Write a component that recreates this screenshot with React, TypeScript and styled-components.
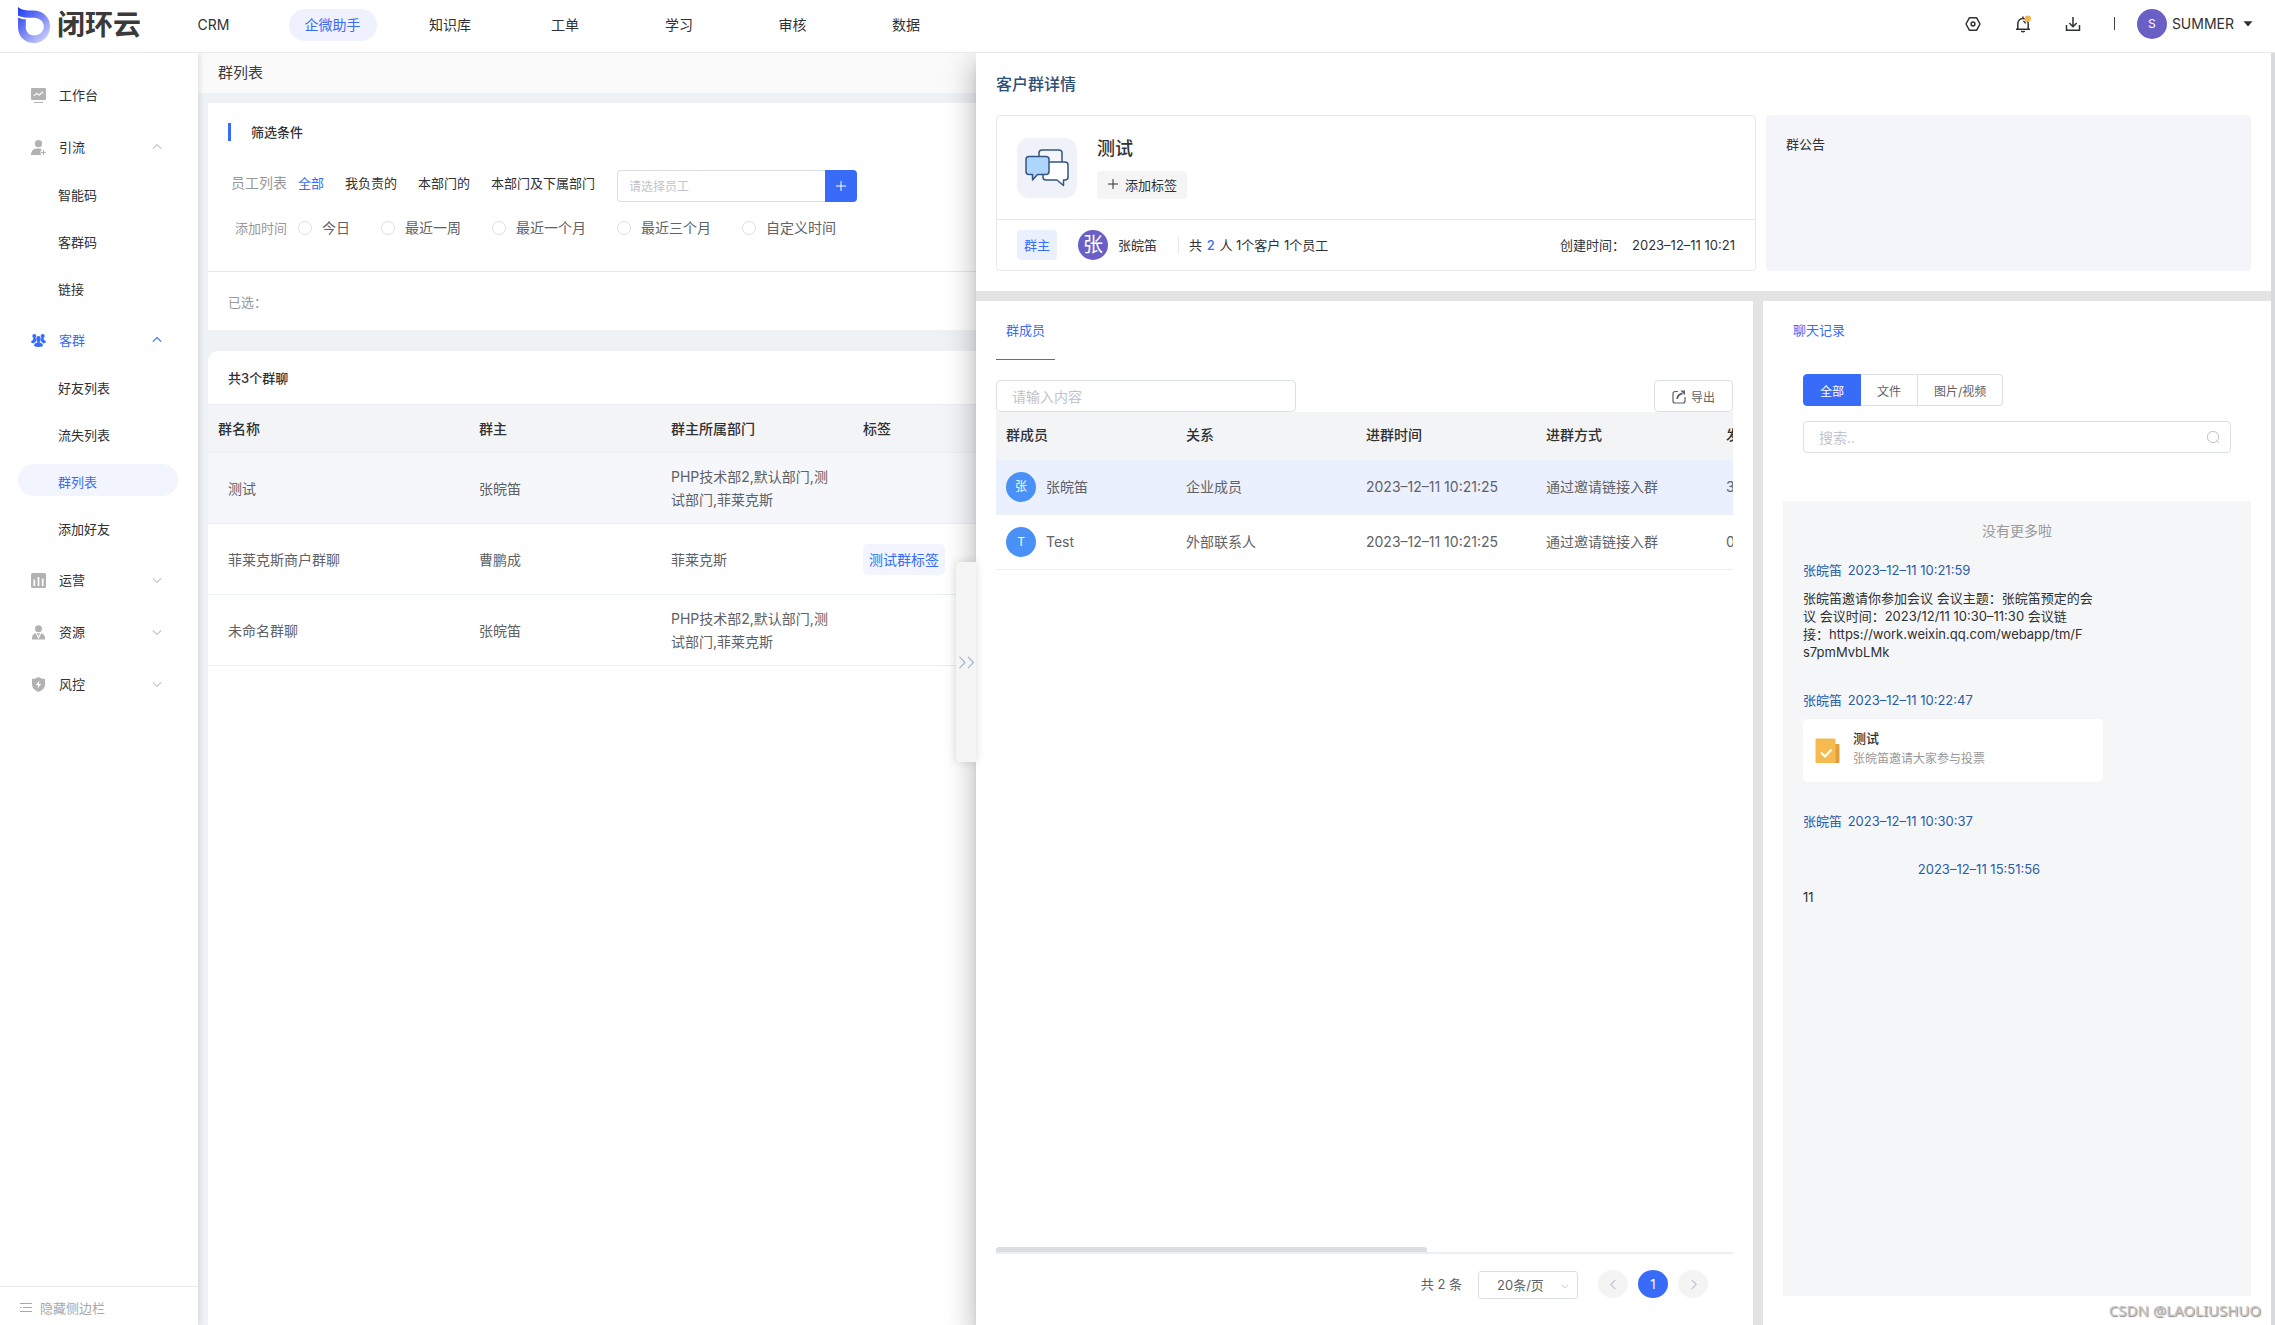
import React from "react";
import styled, { createGlobalStyle, css } from "styled-components";

const BLUE = "#386bf7";
const TEXT = "#303133";
const SUB = "#606266";
const MUTED = "#999999";
const HINT = "#c0c4cc";
const BORDER = "#dcdfe6";
const LINE = "#ebeef5";

const GlobalStyle = createGlobalStyle`
  *, *::before, *::after { box-sizing: border-box; }
  body {
    margin: 0;
    background: #fff;
    color: ${TEXT};
    font-family: Inter, "Noto Sans CJK SC", sans-serif;
    font-size: 13px;
    line-height: 18px;
  }
  button, input, select { font-family: inherit; margin: 0; }
  a { color: inherit; text-decoration: none; }
  h1, h2, p, ul { margin: 0; padding: 0; font-weight: 400; }
  ul { list-style: none; }
`;

/* ---------- shell ---------- */

const Shell = styled.div`
  display: flex;
  flex-direction: column;
  height: 100vh;
  overflow: hidden;
`;

const TopBar = styled.header`
  display: flex;
  align-items: center;
  flex: none;
  height: 53px;
  padding: 0 22px 3px 18px;
  border-bottom: 1px solid #e9e9e9;
`;

const Brand = styled.a`
  display: flex;
  align-items: center;
  gap: 7px;
  width: 136px;
  height: 40px;
  color: #3a3a3a;
  font-size: 28px;
  font-weight: 700;
  line-height: 40px;
  white-space: nowrap;
  svg { flex: none; }
`;

const MainNav = styled.nav`
  display: grid;
  grid-template-columns: 119px 119px 116px 114px 114px 113px 114px;
  justify-items: center;
  font-size: 14px;
`;

const MainNavLink = styled.a<{ $active?: boolean }>`
  height: 32px;
  padding: 0 16px;
  border-radius: 16px;
  line-height: 32px;
  ${(p) => p.$active && css`
    background: #eff2fe;
    color: ${BLUE};
  `}
`;

const TopTools = styled.div`
  display: flex;
  align-items: center;
  margin-left: auto;
  padding-bottom: 2px;
`;

const IconButton = styled.button`
  display: grid;
  place-items: center;
  width: 50px;
  height: 32px;
  padding: 0;
  border: 0;
  background: none;
  color: ${TEXT};
`;

const ToolSeparator = styled.span`
  width: 1px;
  height: 13px;
  margin: 0 22px 0 16px;
  background: #444;
`;

const UserButton = styled.button`
  display: flex;
  align-items: center;
  padding: 0;
  border: 0;
  background: none;
  color: ${TEXT};
  font-size: 14px;
  gap: 5px;
  svg { margin-left: 4px; }
`;

const Avatar = styled.span<{ $color: string; $text: number }>`
  display: inline-grid;
  place-items: center;
  flex: none;
  width: 30px;
  height: 30px;
  border-radius: 50%;
  background: ${(p) => p.$color};
  color: #fff;
  font-size: ${(p) => p.$text}px;
  line-height: 30px;
`;

const Body = styled.div`
  position: relative;
  display: flex;
  flex: 1;
  min-height: 0;
  overflow: hidden;
`;

/* ---------- side bar ---------- */

const SideBar = styled.aside`
  z-index: 1;
  display: flex;
  flex-direction: column;
  flex: none;
  width: 198px;
  background: #fff;
  box-shadow: 1px 0 6px rgba(0, 21, 41, 0.14);
`;

const SideNav = styled.nav`
  flex: 1;
  padding-top: 17px;
`;

const SideParent = styled.a<{ $active?: boolean }>`
  display: flex;
  align-items: center;
  height: 52px;
  padding: 0 36px 2px 31px;
  color: ${(p) => (p.$active ? BLUE : TEXT)};
`;

const SideIcon = styled.span<{ $active?: boolean }>`
  display: flex;
  margin-right: 13px;
  color: ${(p) => (p.$active ? BLUE : "#b2b2b2")};
`;

const SideArrow = styled.span<{ $active?: boolean }>`
  display: flex;
  margin-left: auto;
  color: ${(p) => (p.$active ? BLUE : "#c4c4c4")};
`;

const SideChild = styled.a<{ $active?: boolean }>`
  display: block;
  height: 32px;
  margin: 0 20px 0 18px;
  padding: 4px 0 0 40px;
  border-radius: 16px;
  line-height: 28px;
  color: ${(p) => (p.$active ? BLUE : TEXT)};
  background: ${(p) => (p.$active ? "#f2f5fe" : "none")};
`;

const SideItem = styled.li`
  padding: 3px 0 12px;
`;

const SideFooter = styled.button`
  display: flex;
  align-items: center;
  gap: 8px;
  height: 39px;
  padding: 3px 20px 0;
  border: 0;
  border-top: 1px solid #e9e9e9;
  background: #fff;
  color: #a8a8a8;
  font-size: 13px;
`;

/* ---------- list page ---------- */

const Page = styled.main`
  display: flex;
  flex-direction: column;
  flex: 1;
  min-width: 0;
  background: #eef2f5;
`;

const Crumb = styled.h1`
  height: 40px;
  padding: 0 20px;
  background: #fafafa;
  color: #3d3d3d;
  font-size: 15px;
  line-height: 40px;
`;

const FilterCard = styled.section`
  margin: 10px 10px 21px;
  background: #fff;
`;

const FilterBody = styled.div`
  padding: 20px 20px 27px;
  border-bottom: 1px solid #e9e9e9;
`;

const FilterTitle = styled.h2`
  height: 18px;
  padding-left: 20px;
  border-left: 3px solid ${BLUE};
  font-size: 13px;
  font-weight: 500;
  line-height: 18px;
`;

const FilterRow = styled.div`
  display: flex;
  align-items: center;
  height: 32px;
  margin-top: 10px;
`;

const StaffRow = styled(FilterRow)`
  align-items: flex-start;
  margin-top: 29px;
  line-height: 26px;
`;

const FilterLabel = styled.span<{ $size: number }>`
  width: 59px;
  margin-right: 11px;
  color: ${MUTED};
  font-size: ${(p) => p.$size}px;
  text-align: right;
`;

const ScopeList = styled.div`
  display: flex;
  gap: 21px;
  margin-right: 22px;
`;

const ScopeButton = styled.button<{ $active?: boolean }>`
  padding: 0;
  border: 0;
  background: none;
  color: ${(p) => (p.$active ? BLUE : TEXT)};
  font-size: 13px;
  line-height: 26px;
`;

const StaffPicker = styled.div`
  display: flex;
  width: 240px;
  height: 32px;
`;

const inputBase = css`
  height: 32px;
  border: 1px solid ${BORDER};
  border-radius: 4px;
  background: #fff;
  color: ${SUB};
  outline: none;
  &::placeholder { color: ${HINT}; opacity: 1; }
`;

const StaffInput = styled.input`
  ${inputBase}
  flex: 1;
  min-width: 0;
  padding: 0 11px;
  border-right: 0;
  border-radius: 4px 0 0 4px;
  font-size: 12px;
`;

const StaffAdd = styled.button`
  display: grid;
  place-items: center;
  width: 32px;
  padding: 0;
  border: 0;
  border-radius: 0 4px 4px 0;
  background: ${BLUE};
  color: #fff;
`;

const RadioLabel = styled.label`
  display: flex;
  align-items: center;
  gap: 10px;
  margin-right: 31px;
  color: ${SUB};
  font-size: 14px;
`;

const Radio = styled.input`
  appearance: none;
  width: 14px;
  height: 14px;
  margin: 0;
  border: 1px solid ${BORDER};
  border-radius: 50%;
  background: #fff;
`;

const Picked = styled.p`
  height: 58px;
  padding: 0 20px;
  color: ${MUTED};
  line-height: 60px;
`;

const ListCard = styled.section`
  flex: 1;
  margin: 0 10px;
  border-radius: 10px 10px 0 0;
  background: #fff;
`;

const ListCount = styled.h2`
  height: 53px;
  padding: 0 20px;
  font-size: 13px;
  font-weight: 500;
  line-height: 55px;
`;

const GroupTable = styled.table`
  width: 100%;
  border-collapse: separate;
  border-spacing: 0;
  border-top: 1px solid ${LINE};
  table-layout: fixed;
  color: ${SUB};
  font-size: 14px;
  line-height: 23px;
  th {
    height: 48px;
    padding: 0 10px;
    border-bottom: 1px solid ${LINE};
    background: #f3f4f6;
    color: ${TEXT};
    font-weight: 500;
    text-align: left;
  }
  td {
    height: 71px;
    padding: 0 20px 0 10px;
    border-bottom: 1px solid ${LINE};
  }
  td:first-child { padding-left: 20px; }
`;

const GroupRow = styled.tr<{ $active?: boolean }>`
  background: ${(p) => (p.$active ? "#f5f7fb" : "#fff")};
`;

const TagChip = styled.span`
  display: inline-block;
  height: 31px;
  padding: 0 6px;
  border-radius: 5px;
  background: #f2f5fe;
  color: ${BLUE};
  line-height: 31px;
  white-space: nowrap;
`;

/* ---------- drawer ---------- */

const Drawer = styled.section`
  position: absolute;
  z-index: 2;
  top: 0;
  right: 0;
  bottom: 0;
  left: 976px;
  display: flex;
  flex-direction: column;
  border-right: 4px solid #d9dadb;
  background: #fff;
  box-shadow: 0 8px 10px -5px rgba(0, 0, 0, 0.2), 0 16px 24px 2px rgba(0, 0, 0, 0.14),
    0 6px 30px 5px rgba(0, 0, 0, 0.12);
`;

const DrawerHandle = styled.button`
  position: absolute;
  top: 509px;
  left: -20px;
  display: grid;
  place-items: center;
  width: 20px;
  height: 200px;
  padding: 0;
  border: 0;
  border-radius: 4px 0 0 4px;
  background: #f5f5f5;
  box-shadow: 0 0 10px rgba(0, 0, 0, 0.14);
  color: #9fb3d6;
`;

const DrawerHead = styled.div`
  padding: 20px;
`;

const DrawerTitle = styled.h2`
  margin-bottom: 20px;
  color: #2f5078;
  font-size: 16px;
  font-weight: 500;
  line-height: 22px;
`;

const Summary = styled.div`
  display: grid;
  grid-template-columns: 760fr 485fr;
  gap: 10px;
`;

const GroupCard = styled.div`
  height: 156px;
  border: 1px solid #e9e9e9;
  border-radius: 4px;
`;

const GroupTop = styled.div`
  display: flex;
  gap: 20px;
  height: 104px;
  padding: 22px 20px 0;
  border-bottom: 1px solid #e9e9e9;
`;

const GroupPicture = styled.span`
  display: grid;
  place-items: center;
  width: 60px;
  height: 60px;
  border-radius: 12px;
  background: #f0f2f9;
`;

const GroupName = styled.p`
  height: 33px;
  font-size: 18px;
  font-weight: 500;
  line-height: 22px;
`;

const AddTag = styled.button`
  display: flex;
  align-items: center;
  gap: 6px;
  height: 28px;
  padding: 0 10px 2px;
  border: 0;
  border-radius: 4px;
  background: #f5f5f5;
  color: ${TEXT};
  font-size: 13px;
`;

const OwnerRow = styled.div`
  display: flex;
  align-items: center;
  height: 50px;
  padding: 0 20px;
`;

const OwnerTag = styled.span`
  height: 30px;
  margin-right: 21px;
  padding: 0 7px;
  border-radius: 4px;
  background: #ebf0fe;
  color: ${BLUE};
  line-height: 30px;
`;

const OwnerName = styled.span`
  margin-left: 10px;
  padding-right: 21px;
`;

const OwnerStats = styled.span`
  padding-left: 10px;
  border-left: 1px solid #e9e9e9;
  b {
    margin: 0 1px;
    color: ${BLUE};
    font-weight: 500;
  }
`;

const CreatedAt = styled.span`
  margin-left: auto;
  time { margin-left: 7px; }
`;

const Notice = styled.div`
  padding: 20px;
  border-radius: 4px;
  background: #f4f5fa;
`;

const DrawerPanels = styled.div`
  display: grid;
  grid-template-columns: 777fr 508fr;
  gap: 10px;
  flex: 1;
  min-height: 0;
  border-top: 10px solid #e3e3e3;
  background: #e3e3e3;
`;

const Panel = styled.div`
  display: flex;
  flex-direction: column;
  min-width: 0;
  background: #fff;
  padding: 0 20px;
`;

const PanelTab = styled.button`
  align-self: flex-start;
  height: 59px;
  padding: 0 10px 2px;
  border: 0;
  border-bottom: 1px solid ${BLUE};
  background: none;
  color: ${BLUE};
  font-size: 13px;
`;

const MemberTools = styled.div`
  display: flex;
  justify-content: space-between;
  margin-top: 20px;
`;

const MemberSearch = styled.input`
  ${inputBase}
  width: 300px;
  padding: 0 15px;
  font-size: 14px;
`;

const ExportButton = styled.button`
  display: flex;
  align-items: center;
  justify-content: center;
  gap: 5px;
  width: 79px;
  height: 32px;
  padding: 1px 0 0;
  border: 1px solid ${BORDER};
  border-radius: 4px;
  background: #fff;
  color: ${SUB};
  font-size: 12px;
`;

const MemberArea = styled.div`
  display: flex;
  flex-direction: column;
  flex: 1;
  min-height: 0;
  overflow: hidden;
  border-bottom: 2px solid ${LINE};
`;

const MemberTable = styled.table`
  width: 1260px;
  border-collapse: separate;
  border-spacing: 0;
  table-layout: fixed;
  color: ${SUB};
  font-size: 14px;
  th {
    width: 180px;
    height: 48px;
    padding: 0 10px 2px;
    background: #f3f4f6;
    color: ${TEXT};
    font-weight: 500;
    text-align: left;
  }
  td {
    height: 55px;
    padding: 0 10px;
    border-bottom: 1px solid ${LINE};
  }
`;

const MemberRow = styled.tr<{ $active?: boolean }>`
  background: ${(p) => (p.$active ? "#ebf0fe" : "#fff")};
`;

const MemberName = styled.span`
  display: flex;
  align-items: center;
  gap: 10px;
`;

const ScrollThumb = styled.div`
  width: 431px;
  height: 5px;
  margin-top: auto;
  border-radius: 3px 3px 0 0;
  background: #dddee0;
`;

const Pager = styled.nav`
  display: flex;
  align-items: center;
  justify-content: flex-end;
  gap: 10px;
  height: 71px;
  padding: 0 25px 11px 0;
  color: ${SUB};
`;

const PageSize = styled.label`
  position: relative;
  display: block;
  margin: 2px 10px 0 6px;
  color: ${HINT};
  svg {
    position: absolute;
    top: 11px;
    right: 9px;
    pointer-events: none;
  }
`;

const PageSizeSelect = styled.select`
  appearance: none;
  display: block;
  width: 100px;
  height: 28px;
  padding: 0 18px;
  border: 1px solid ${BORDER};
  border-radius: 3px;
  background: #fff;
  color: ${SUB};
  font-size: 13px;
`;

const PageButton = styled.button<{ $active?: boolean }>`
  display: grid;
  place-items: center;
  width: 30px;
  height: 28px;
  padding: 0;
  border: 0;
  border-radius: 50%;
  background: ${(p) => (p.$active ? BLUE : "#f4f4f5")};
  color: ${(p) => (p.$active ? "#fff" : HINT)};
  font-size: 13px;
`;

/* ---------- chat ---------- */

const ChatTitle = styled.h2`
  height: 73px;
  padding: 0 10px;
  color: ${BLUE};
  font-size: 13px;
  line-height: 58px;
`;

const ChatKinds = styled.div`
  display: flex;
  padding: 0 20px;
`;

const ChatKind = styled.button<{ $active?: boolean }>`
  height: 32px;
  padding: 0 16px;
  border: 1px solid ${(p) => (p.$active ? BLUE : BORDER)};
  border-left-width: ${(p) => (p.$active ? 1 : 0)}px;
  background: ${(p) => (p.$active ? BLUE : "#fff")};
  color: ${(p) => (p.$active ? "#fff" : SUB)};
  font-size: 12px;
  &:first-child { border-radius: 4px 0 0 4px; }
  &:last-child { border-radius: 0 4px 4px 0; }
`;

const ChatSearch = styled.label`
  position: relative;
  display: block;
  margin: 15px 20px 48px;
  color: ${HINT};
  svg {
    position: absolute;
    top: 9px;
    right: 11px;
  }
`;

const ChatSearchInput = styled.input`
  ${inputBase}
  display: block;
  width: 100%;
  padding: 0 30px 0 15px;
  font-size: 14px;
`;

const ChatLog = styled.div`
  flex: 1;
  margin-bottom: 29px;
  padding: 20px;
  background: #f5f6f8;
`;

const ChatEnd = styled.p`
  margin-bottom: 20px;
  color: ${MUTED};
  font-size: 14px;
  line-height: 20px;
  text-align: center;
`;

const Message = styled.article`
  width: 300px;
  margin-bottom: 30px;
`;

const MessageHead = styled.p<{ $nameless?: boolean }>`
  margin-bottom: 10px;
  color: #2a5caa;
  ${(p) => p.$nameless && css`
    padding-left: 50px;
    text-align: center;
  `}
  time { margin-left: 2px; }
`;

const MessageText = styled.p`
  white-space: pre-line;
`;

const VoteCard = styled.div`
  display: flex;
  align-items: center;
  gap: 13px;
  height: 63px;
  padding: 0 12px;
  border-radius: 5px;
  background: #fff;
`;

const VoteTitle = styled.p`
  font-weight: 500;
  line-height: 20px;
`;

const VoteNote = styled.p`
  height: 25px;
  color: ${MUTED};
  font-size: 12px;
  line-height: 22px;
`;

const Watermark = styled.span`
  position: absolute;
  z-index: 3;
  right: 14px;
  bottom: 4px;
  color: #c4c4c4;
  font-family: "Noto Sans", sans-serif;
  font-size: 15px;
  line-height: 22px;
  text-shadow: 1px 1px 1px #888;
`;

/* ---------- drawings ---------- */

type ChevronProps = { dir: "up" | "down" | "left" | "right"; size?: number };

const chevrons = {
  up: "M1 8 6 3 11 8",
  down: "M1 4 6 9 11 4",
  left: "M8 1 3 6 8 11",
  right: "M4 1 9 6 4 11",
};

const Chevron = ({ dir, size = 9 }: ChevronProps) => (
  <svg width={size} height={size} viewBox="0 0 12 12" fill="none" stroke="currentColor" strokeWidth="1.3">
    <path d={chevrons[dir]} />
  </svg>
);

const Plus = ({ size }: { size: number }) => (
  <svg width={size} height={size} viewBox="0 0 12 12" stroke="currentColor" strokeWidth="1">
    <path d="M6 1v10M1 6h10" />
  </svg>
);

const LogoMark = () => (
  <svg width="32" height="36" viewBox="0 0 32 36">
    <defs>
      <linearGradient id="logoFill" x1="0" y1="0" x2="0.8" y2="1">
        <stop offset="0" stopColor="#1c3af5" />
        <stop offset="0.45" stopColor="#6a78f2" />
        <stop offset="1" stopColor="#cfd0fb" />
      </linearGradient>
    </defs>
    <path
      fill="url(#logoFill)"
      fillRule="evenodd"
      d="M0 0C4 3.200 8 3.600 15 3.600 25 3.600 32 10 32 19.500S25 36 16.500 36C7 36 0 30 0 20V10.500C2.500 11.800 5 12.300 7.800 12.300V20c0 5 3.500 8.500 8.500 8.500s9.500-3.800 9.500-9-4.300-8.700-10-8.700C9 10.800 4 10.500 0 8.700Z"
    />
  </svg>
);

const SettingIcon = () => (
  <svg width="16" height="16" viewBox="0 0 16 16" fill="none" stroke="currentColor" strokeWidth="1.5" strokeLinejoin="round">
    <path d="M4.500 1.700h7L15 8l-3.500 6.300h-7L1 8Z" />
    <circle cx="8" cy="8" r="1.900" />
  </svg>
);

const BellIcon = () => (
  <svg width="18" height="18" viewBox="0 0 18 18" fill="none" stroke="currentColor" strokeWidth="1.500">
    <path d="M2 14.200h14M3.800 14V8.600a5.200 5.200 0 0 1 10.400 0V14M9 3.400V1.600M7.200 16.200q1.800 1.200 3.600 0M9.300 6.200q2 .3 2.200 2.300" />
    <circle cx="13.800" cy="3.600" r="3.200" fill="#f5b54a" stroke="none" />
  </svg>
);

const DownloadIcon = () => (
  <svg width="16" height="16" viewBox="0 0 16 16" fill="none" stroke="currentColor" strokeWidth="1.500">
    <path d="M1.500 9v5.300h13V9M8 1v9.500M4.300 7 8 10.700 11.700 7" />
  </svg>
);

const CaretIcon = () => (
  <svg width="10" height="6" viewBox="0 0 10 6">
    <path d="M.5.300h9L5 5.500Z" fill="currentColor" />
  </svg>
);

const BoardIcon = () => (
  <svg width="15" height="15" viewBox="0 0 15 15">
    <rect width="15" height="12" rx="1.300" fill="currentColor" />
    <path d="M3 14.500h9" stroke="currentColor" />
    <path d="m2.800 7.800 2.900-2.400 2.600 1.700 3.700-3.400" fill="none" stroke="#fff" strokeWidth="1.200" />
  </svg>
);

const PersonAddIcon = () => (
  <svg width="15" height="15" viewBox="0 0 15 15" fill="currentColor">
    <circle cx="7.500" cy="3.700" r="3.600" />
    <path d="M0 15c0-4.500 3-6.500 6-6.500h2.500c1.200 0 1.700.3 2.200.7C9.300 10.500 9 13 10.200 15Z" />
    <path d="M12.400 10v5M9.900 12.500h5" stroke="currentColor" strokeWidth="1.100" />
  </svg>
);

const CrowdIcon = () => (
  <svg width="15" height="13" viewBox="0 0 15 13" fill="currentColor">
    <circle cx="3.300" cy="2" r="2" />
    <circle cx="11.700" cy="2" r="2" />
    <path d="M2.200 3.500h2.300l.9 3.600-2.700 2.400L0 8.600q0-2 2.200-2.800ZM12.800 3.500h-2.300l-.9 3.600 2.700 2.400L15 8.600q0-2-2.200-2.800Z" />
    <ellipse cx="7.500" cy="4.700" rx="2.200" ry="2.800" />
    <path d="M6.300 6.500h2.400v2q3.300.8 3.300 3.500Q7.500 14 3 12q0-2.700 3.300-3.500Z" />
  </svg>
);

const ChartIcon = () => (
  <svg width="15" height="15" viewBox="0 0 15 15">
    <rect width="15" height="15" rx="1.600" fill="currentColor" />
    <path d="M3.300 6.500V13M7.500 4v9M11.700 5.500V13" stroke="#fff" strokeWidth="1.700" />
  </svg>
);

const StaffIcon = () => (
  <svg width="15" height="15" viewBox="0 0 15 15">
    <circle cx="7.500" cy="3.800" r="3.500" fill="currentColor" />
    <path d="M.8 14.500c0-4 1.500-6 4.200-6.300h5c2.700.3 4.200 2.300 4.200 6.300Z" fill="currentColor" />
    <path d="M5.300 8.200 7.500 13l2.200-4.800" fill="none" stroke="#fff" strokeWidth="1.100" />
  </svg>
);

const ShieldIcon = () => (
  <svg width="15" height="15" viewBox="0 0 15 15">
    <path d="M7.500 0q3 1.900 6.500 2v5.500q0 5-6.500 7.500Q1 12.500 1 7.500V2Q4.500 1.900 7.500 0Z" fill="currentColor" />
    <path d="M8.500 3.500 4.800 8h2.400l-.7 3.500L10.200 7H7.800Z" fill="#fff" />
  </svg>
);

const MenuIcon = () => (
  <svg width="12" height="11" viewBox="0 0 12 11" stroke="currentColor" strokeWidth="1">
    <path d="M0 1.500h12M3 5.500h9M0 9.500h12M0 5.500h1.500" />
  </svg>
);

const ChatIcon = () => (
  <svg width="44" height="38" viewBox="0 0 44 38" fill="#fff" stroke="#33557f" strokeWidth="1.500" strokeLinejoin="round">
    <path d="M14 12V4q0-3 3-3h17q3 0 3 3v9" fill="#f5f6fb" />
    <path d="M24 13h16q3 0 3 3v12q0 3-3 3h-1.500v5.500L32 31H21q-3 0-3-3V13Z" />
    <path d="M4 7.500h17q3 0 3 3v12q0 3-3 3h-8.500L7.500 31v-5.500H4q-3 0-3-3v-12q0-3 3-3Z" fill="#aed5fb" />
  </svg>
);

const ExportIcon = () => (
  <svg width="14" height="14" viewBox="0 0 14 14" fill="none" stroke="currentColor" strokeWidth="1.200">
    <path d="M6 1.500H3a2 2 0 0 0-2 2V11a2 2 0 0 0 2 2h8a2 2 0 0 0 2-2V7" />
    <path d="M5.200 9C5.500 5.800 7.500 3.900 10.500 3.500" strokeWidth="1.800" />
    <path d="M8.300.5H13v4.700Z" fill="currentColor" stroke="none" />
  </svg>
);

const SearchIcon = () => (
  <svg width="14" height="14" viewBox="0 0 14 14" fill="none" stroke="currentColor">
    <circle cx="7" cy="7" r="5.600" />
    <path d="m10.800 10.800 2 2" />
  </svg>
);

const DoubleChevron = () => (
  <svg width="17" height="13" viewBox="0 0 17 13" fill="none" stroke="currentColor" strokeWidth="1.200">
    <path d="M1.500.8 7 6.500 1.500 12.200M10 .8l5.500 5.700L10 12.200" />
  </svg>
);

const VoteIcon = () => (
  <svg width="25" height="25" viewBox="0 0 25 25">
    <path d="M14 6h9.500q1 0 1 1v17q0 1-1 1H14Z" fill="#dfa03c" />
    <rect x=".5" y=".5" width="20" height="24.500" rx="1.200" fill="#f6bb50" />
    <path d="m6 14.500 4 4 6.500-7" fill="none" stroke="#fff" strokeWidth="2.200" />
  </svg>
);

/* ---------- data ---------- */

const topMenu = ["CRM", "企微助手", "知识库", "工单", "学习", "审核", "数据"];

type SideEntry = { name: string; icon: React.ReactNode; active?: boolean; dir?: "up" | "down"; items?: string[] };

const sideMenu: SideEntry[] = [
  { name: "工作台", icon: <BoardIcon /> },
  { name: "引流", icon: <PersonAddIcon />, dir: "up", items: ["智能码", "客群码", "链接"] },
  { name: "客群", icon: <CrowdIcon />, dir: "up", active: true, items: ["好友列表", "流失列表", "群列表", "添加好友"] },
  { name: "运营", icon: <ChartIcon />, dir: "down" },
  { name: "资源", icon: <StaffIcon />, dir: "down" },
  { name: "风控", icon: <ShieldIcon />, dir: "down" },
];

const scopes = ["全部", "我负责的", "本部门的", "本部门及下属部门"];
const periods = ["今日", "最近一周", "最近一个月", "最近三个月", "自定义时间"];

const groups = [
  { name: "测试", owner: "张皖笛", dept: "PHP技术部2,默认部门,测试部门,菲莱克斯", tag: "" },
  { name: "菲莱克斯商户群聊", owner: "曹鹏成", dept: "菲莱克斯", tag: "测试群标签" },
  { name: "未命名群聊", owner: "张皖笛", dept: "PHP技术部2,默认部门,测试部门,菲莱克斯", tag: "" },
];

const members = [
  { mark: "张", name: "张皖笛", relation: "企业成员", time: "2023–12–11 10:21:25", way: "通过邀请链接入群", count: 3 },
  { mark: "T", name: "Test", relation: "外部联系人", time: "2023–12–11 10:21:25", way: "通过邀请链接入群", count: 0 },
];

const meetingText = `张皖笛邀请你参加会议 会议主题：张皖笛预定的会
议 会议时间：2023/12/11 10:30–11:30 会议链
接：https://work.weixin.qq.com/webapp/tm/F
s7pmMvbLMk`;

/* ---------- sections ---------- */

const Header = () => (
  <TopBar>
    <Brand href="#">
      <LogoMark />
      闭环云
    </Brand>
    <MainNav>
      {topMenu.map((name) => (
        <MainNavLink key={name} href="#" $active={name === "企微助手"}>{name}</MainNavLink>
      ))}
    </MainNav>
    <TopTools>
      <IconButton><SettingIcon /></IconButton>
      <IconButton><BellIcon /></IconButton>
      <IconButton><DownloadIcon /></IconButton>
      <ToolSeparator />
      <UserButton>
        <Avatar $color="#6a5fc4" $text={12}>S</Avatar>
        SUMMER
        <CaretIcon />
      </UserButton>
    </TopTools>
  </TopBar>
);

const Side = () => (
  <SideBar>
    <SideNav>
      {sideMenu.map((entry) => (
        <React.Fragment key={entry.name}>
          <SideParent href="#" $active={entry.active}>
            <SideIcon $active={entry.active}>{entry.icon}</SideIcon>
            {entry.name}
            {entry.dir && (
              <SideArrow $active={entry.active}><Chevron dir={entry.dir} size={10} /></SideArrow>
            )}
          </SideParent>
          {entry.items && (
            <ul>
              {entry.items.map((item) => (
                <SideItem key={item}>
                  <SideChild href="#" $active={item === "群列表"}>{item}</SideChild>
                </SideItem>
              ))}
            </ul>
          )}
        </React.Fragment>
      ))}
    </SideNav>
    <SideFooter><MenuIcon />隐藏侧边栏</SideFooter>
  </SideBar>
);

const Filters = () => (
  <FilterCard>
    <FilterBody>
      <FilterTitle>筛选条件</FilterTitle>
      <StaffRow>
        <FilterLabel $size={14}>员工列表</FilterLabel>
        <ScopeList>
          {scopes.map((scope, i) => (
            <ScopeButton key={scope} $active={i === 0}>{scope}</ScopeButton>
          ))}
        </ScopeList>
        <StaffPicker>
          <StaffInput placeholder="请选择员工" />
          <StaffAdd><Plus size={12} /></StaffAdd>
        </StaffPicker>
      </StaffRow>
      <FilterRow>
        <FilterLabel $size={13}>添加时间</FilterLabel>
        {periods.map((period) => (
          <RadioLabel key={period}>
            <Radio type="radio" name="period" />
            {period}
          </RadioLabel>
        ))}
      </FilterRow>
    </FilterBody>
    <Picked>已选：</Picked>
  </FilterCard>
);

const Groups = () => (
  <ListCard>
    <ListCount>共3个群聊</ListCount>
    <GroupTable>
      <colgroup>
        <col style={{ width: 261 }} />
        <col style={{ width: 192 }} />
        <col style={{ width: 192 }} />
        <col />
      </colgroup>
      <thead>
        <tr>
          <th>群名称</th>
          <th>群主</th>
          <th>群主所属部门</th>
          <th>标签</th>
        </tr>
      </thead>
      <tbody>
        {groups.map((group, i) => (
          <GroupRow key={group.name} $active={i === 0}>
            <td>{group.name}</td>
            <td>{group.owner}</td>
            <td>{group.dept}</td>
            <td>{group.tag && <TagChip>{group.tag}</TagChip>}</td>
          </GroupRow>
        ))}
      </tbody>
    </GroupTable>
  </ListCard>
);

const Members = () => (
  <Panel>
    <PanelTab>群成员</PanelTab>
    <MemberTools>
      <MemberSearch placeholder="请输入内容" />
      <ExportButton><ExportIcon />导出</ExportButton>
    </MemberTools>
    <MemberArea>
      <MemberTable>
        <thead>
          <tr>
            <th>群成员</th>
            <th>关系</th>
            <th>进群时间</th>
            <th>进群方式</th>
            <th>发</th>
            <th />
            <th />
          </tr>
        </thead>
        <tbody>
          {members.map((member, i) => (
            <MemberRow key={member.name} $active={i === 0}>
              <td>
                <MemberName>
                  <Avatar $color="#4a91f7" $text={12}>{member.mark}</Avatar>
                  {member.name}
                </MemberName>
              </td>
              <td>{member.relation}</td>
              <td>{member.time}</td>
              <td>{member.way}</td>
              <td>{member.count}</td>
              <td />
              <td />
            </MemberRow>
          ))}
        </tbody>
      </MemberTable>
      <ScrollThumb />
    </MemberArea>
    <Pager>
      共 2 条
      <PageSize>
        <PageSizeSelect>
          <option>20条/页</option>
        </PageSizeSelect>
        <Chevron dir="down" size={8} />
      </PageSize>
      <PageButton><Chevron dir="left" size={11} /></PageButton>
      <PageButton $active>1</PageButton>
      <PageButton><Chevron dir="right" size={11} /></PageButton>
    </Pager>
  </Panel>
);

const Chat = () => (
  <Panel>
    <ChatTitle>聊天记录</ChatTitle>
    <ChatKinds>
      <ChatKind $active>全部</ChatKind>
      <ChatKind>文件</ChatKind>
      <ChatKind>图片/视频</ChatKind>
    </ChatKinds>
    <ChatSearch>
      <ChatSearchInput placeholder="搜索.." />
      <SearchIcon />
    </ChatSearch>
    <ChatLog>
      <ChatEnd>没有更多啦</ChatEnd>
      <Message>
        <MessageHead>张皖笛 <time>2023–12–11 10:21:59</time></MessageHead>
        <MessageText>{meetingText}</MessageText>
      </Message>
      <Message>
        <MessageHead>张皖笛 <time>2023–12–11 10:22:47</time></MessageHead>
        <VoteCard>
          <VoteIcon />
          <div>
            <VoteTitle>测试</VoteTitle>
            <VoteNote>张皖笛邀请大家参与投票</VoteNote>
          </div>
        </VoteCard>
      </Message>
      <Message>
        <MessageHead>张皖笛 <time>2023–12–11 10:30:37</time></MessageHead>
      </Message>
      <Message>
        <MessageHead $nameless><time>2023–12–11 15:51:56</time></MessageHead>
        <MessageText>11</MessageText>
      </Message>
    </ChatLog>
  </Panel>
);

const GroupDrawer = () => (
  <Drawer>
    <DrawerHandle><DoubleChevron /></DrawerHandle>
    <DrawerHead>
      <DrawerTitle>客户群详情</DrawerTitle>
      <Summary>
        <GroupCard>
          <GroupTop>
            <GroupPicture><ChatIcon /></GroupPicture>
            <div>
              <GroupName>测试</GroupName>
              <AddTag><Plus size={12} />添加标签</AddTag>
            </div>
          </GroupTop>
          <OwnerRow>
            <OwnerTag>群主</OwnerTag>
            <Avatar $color="#6a5fc4" $text={20}>张</Avatar>
            <OwnerName>张皖笛</OwnerName>
            <OwnerStats>共 <b>2</b> 人 1个客户 1个员工</OwnerStats>
            <CreatedAt>创建时间：<time>2023–12–11 10:21</time></CreatedAt>
          </OwnerRow>
        </GroupCard>
        <Notice>群公告</Notice>
      </Summary>
    </DrawerHead>
    <DrawerPanels>
      <Members />
      <Chat />
    </DrawerPanels>
  </Drawer>
);

export default function App() {
  return (
    <>
      <GlobalStyle />
      <Shell>
        <Header />
        <Body>
          <Side />
          <Page>
            <Crumb>群列表</Crumb>
            <Filters />
            <Groups />
          </Page>
          <GroupDrawer />
          <Watermark>CSDN @LAOLIUSHUO</Watermark>
        </Body>
      </Shell>
    </>
  );
}
